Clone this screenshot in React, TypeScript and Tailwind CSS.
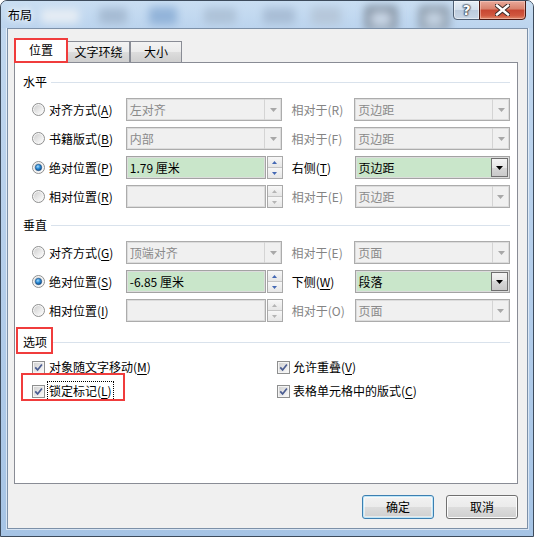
import React from "react";

type Row = {
  checked: boolean;
  label: string;
  key: string;
  kind: "combo" | "spin";
  value: string;
  active: boolean;
  mid: string;
  midKey: string;
  right: string;
};

const hRows: Row[] = [
  { checked: false, label: "对齐方式", key: "A", kind: "combo", value: "左对齐", active: false, mid: "相对于", midKey: "R", right: "页边距" },
  { checked: false, label: "书籍版式", key: "B", kind: "combo", value: "内部", active: false, mid: "相对于", midKey: "F", right: "页边距" },
  { checked: true, label: "绝对位置", key: "P", kind: "spin", value: "1.79 厘米", active: true, mid: "右侧", midKey: "T", right: "页边距" },
  { checked: false, label: "相对位置", key: "R", kind: "spin", value: "", active: false, mid: "相对于", midKey: "E", right: "页边距" },
];

const vRows: Row[] = [
  { checked: false, label: "对齐方式", key: "G", kind: "combo", value: "顶端对齐", active: false, mid: "相对于", midKey: "E", right: "页面" },
  { checked: true, label: "绝对位置", key: "S", kind: "spin", value: "-6.85 厘米", active: true, mid: "下侧", midKey: "W", right: "段落" },
  { checked: false, label: "相对位置", key: "I", kind: "spin", value: "", active: false, mid: "相对于", midKey: "O", right: "页面" },
];

function Down({ color }: { color: string }) {
  return (
    <svg width="7" height="4" viewBox="0 0 7 4">
      <path d="M0 0h7L3.5 4z" fill={color} />
    </svg>
  );
}

function SpinArrow({ up, color }: { up: boolean; color: string }) {
  return (
    <svg width="5" height="3" viewBox="0 0 5 3">
      <path d={up ? "M0 3h5L2.5 0z" : "M0 0h5L2.5 3z"} fill={color} />
    </svg>
  );
}

function Radio({ checked }: { checked: boolean }) {
  return (
    <svg width="13" height="13" viewBox="0 0 13 13" className="shrink-0">
      <defs>
        <linearGradient id="rgIn" x1="0" y1="0" x2="1" y2="1">
          <stop offset="0" stopColor="#cfcfcf" />
          <stop offset="1" stopColor="#fdfdfd" />
        </linearGradient>
        <radialGradient id="rgDot" cx="0.4" cy="0.35" r="0.75">
          <stop offset="0" stopColor="#a6dcff" />
          <stop offset="0.45" stopColor="#2a8bd6" />
          <stop offset="1" stopColor="#0b3f78" />
        </radialGradient>
      </defs>
      <circle cx="6.5" cy="6.5" r="6" fill="#f6f6f6" stroke="#8e8f8f" />
      <circle cx="6.5" cy="6.5" r="4.5" fill="url(#rgIn)" />
      {checked && <circle cx="6.5" cy="6.5" r="3.2" fill="url(#rgDot)" stroke="#1b4b80" strokeWidth="0.6" />}
    </svg>
  );
}

function Check() {
  return (
    <svg width="13" height="13" viewBox="0 0 13 13" className="shrink-0">
      <defs>
        <linearGradient id="cbIn" x1="0" y1="0" x2="1" y2="1">
          <stop offset="0" stopColor="#d2d2d2" />
          <stop offset="1" stopColor="#f8f8f8" />
        </linearGradient>
      </defs>
      <rect x="0.5" y="0.5" width="12" height="12" fill="#f4f4f4" stroke="#8e8f8f" />
      <rect x="2" y="2" width="9" height="9" fill="url(#cbIn)" />
      <path d="M3.2 6.3 L5.6 8.9 L9.9 3.4" stroke="#4b5d92" strokeWidth="1.7" fill="none" />
    </svg>
  );
}

function Lbl({ text, k, underline = true }: { text: string; k: string; underline?: boolean }) {
  return (
    <span className="whitespace-nowrap">
      {text}(<span className={underline ? "underline underline-offset-2" : ""}>{k}</span>)
    </span>
  );
}

function Combo({ text, active, wide }: { text: string; active: boolean; wide: boolean }) {
  return (
    <div
      className={
        "h-[23px] flex border shadow-[inset_0_0_0_1px_#dcdcdc] " +
        (wide ? "w-[157px] " : "w-[156px] ") +
        (active ? "bg-[#c9e6ca] border-[#a3a3a3]" : "bg-[#f0f0f0] border-[#acacac]")
      }
    >
      <div className={"flex-1 pl-[3px] flex items-center " + (active ? "text-black" : "text-[#8a8a8a]")}>{text}</div>
      {active ? (
        <div className="w-[17px] my-[1px] mr-[1px] border border-[#6f6f6f] bg-[linear-gradient(180deg,#f4f4f4,#e6e6e6_50%,#d7d7d7_50%,#c9c9c9)] flex items-center justify-center">
          <Down color="#000" />
        </div>
      ) : (
        <div className="w-[17px] border-l border-[#d4d4d4] flex items-center justify-center">
          <Down color="#a8a8a8" />
        </div>
      )}
    </div>
  );
}

function Spin({ value, active }: { value: string; active: boolean }) {
  const ac = active ? "#4468b4" : "#b4b4b4";
  return (
    <div className="w-[157px] h-[23px] flex">
      <div
        className={
          "w-[140px] border flex items-center pl-[3px] shadow-[inset_0_0_0_1px_#dcdcdc] " +
          (active ? "bg-[#c9e6ca] border-[#a3a3a3] text-black" : "bg-[#f0f0f0] border-[#acacac]")
        }
      >
        {value}
      </div>
      <div className="ml-[1px] w-[16px] flex flex-col border border-[#a9a9a9] bg-[#f0f0f0]">
        <div className="flex-1 flex items-center justify-center border-b border-[#c4c4c4] bg-[linear-gradient(180deg,#f7f7f7,#e6e6e6)]">
          <SpinArrow up color={ac} />
        </div>
        <div className="flex-1 flex items-center justify-center bg-[linear-gradient(180deg,#f7f7f7,#e6e6e6)]">
          <SpinArrow up={false} color={ac} />
        </div>
      </div>
    </div>
  );
}

function PosRow({ r }: { r: Row }) {
  return (
    <div className="ml-[9px] h-[23px] flex items-center">
      <Radio checked={r.checked} />
      <div className="ml-[4px] w-[77px]">
        <Lbl text={r.label} k={r.key} />
      </div>
      {r.kind === "combo" ? <Combo text={r.value} active={r.active} wide /> : <Spin value={r.value} active={r.active} />}
      <div className={"ml-[9px] w-[63px] " + (r.active ? "text-black" : "text-[#848484]")}>
        <Lbl text={r.mid} k={r.midKey} underline={r.active} />
      </div>
      <Combo text={r.right} active={r.active} wide={false} />
    </div>
  );
}

function Header({ text, boxed }: { text: string; boxed?: boolean }) {
  return (
    <div className="h-[16px] flex items-center">
      <span className="relative">
        {text}
        {boxed && <span className="absolute left-[-7px] top-[-7px] w-[37px] h-[27px] border-2 border-[#f03c3c]" />}
      </span>
      <div className="flex-1 ml-[4px] h-px bg-[#d9e2ec]" />
    </div>
  );
}

function TitleBg() {
  return (
    <svg className="absolute inset-0" width="532" height="27" viewBox="0 0 532 27">
      <defs>
        <filter id="bl" x="-50%" y="-50%" width="200%" height="200%">
          <feGaussianBlur stdDeviation="4" />
        </filter>
        <linearGradient id="tb" x1="0" y1="0" x2="0" y2="1">
          <stop offset="0" stopColor="#c9def2" />
          <stop offset="1" stopColor="#bcd4ee" />
        </linearGradient>
      </defs>
      <rect width="532" height="27" fill="url(#tb)" />
      <g filter="url(#bl)">
        <rect x="40" y="8" width="38" height="14" rx="3" fill="#e6edf4" />
        <rect x="98" y="7" width="28" height="16" rx="3" fill="#a6bbd3" />
        <rect x="148" y="6" width="28" height="18" rx="3" fill="#93b4d9" />
        <rect x="203" y="7" width="32" height="16" rx="3" fill="#aec2d8" />
        <rect x="262" y="7" width="32" height="16" rx="3" fill="#a8bdd5" />
        <rect x="310" y="6" width="30" height="18" rx="3" fill="#b6c7da" />
        <rect x="364" y="5" width="32" height="24" rx="3" fill="#7a8898" />
        <rect x="370" y="11" width="20" height="14" fill="#c8d6e6" />
        <rect x="418" y="5" width="30" height="24" rx="3" fill="#8795a4" />
        <rect x="424" y="11" width="18" height="14" fill="#c3d2e2" />
      </g>
    </svg>
  );
}

export default function App() {
  return (
    <div className="w-[534px] h-[537px] flex flex-col rounded-t-[7px] border border-[#3d4b5c] overflow-hidden bg-[linear-gradient(180deg,#c2d8ef_0%,#b3cdea_55%,#a6c4e5_100%)] font-['Noto_Sans_CJK_SC',sans-serif] text-[12px] leading-[16px] text-black">
      {/* title bar */}
      <div className="relative h-[27px] flex justify-between shrink-0">
        <TitleBg />
        <div className="relative pl-[7px] pt-[6px] [text-shadow:0_0_6px_#fff,0_0_10px_#fff]">布局</div>
        <div className="relative flex -mt-px mr-[7px] h-[20px]">
          <div className="w-[27px] h-[20px] border border-[#4f5f73] rounded-bl-[4px] bg-[linear-gradient(180deg,#e6eef6,#d3dfec_50%,#bccbdd_50%,#c9d7e6)] shadow-[inset_0_0_0_1px_rgba(255,255,255,0.5)] flex items-center justify-center">
            <span className="text-white font-bold text-[14px] leading-[14px] font-['DejaVu_Sans',sans-serif] [text-shadow:0_0_1px_#2b3442,0_0_1px_#2b3442,0_0_2px_#2b3442,0_0_2px_#2b3442]">?</span>
          </div>
          <div className="w-[47px] h-[20px] -ml-px border border-[#4a1912] rounded-br-[4px] bg-[linear-gradient(180deg,#e9a99a,#d8816c_45%,#c74631_50%,#d0573f_80%,#e08a6c)] shadow-[inset_0_0_0_1px_rgba(255,220,210,0.45)] flex items-center justify-center">
            <svg width="15" height="12" viewBox="0 0 15 12">
              <path d="M2 1.5 L13 10.5 M13 1.5 L2 10.5" stroke="#3a2a28" strokeWidth="4.4" strokeLinecap="square" />
              <path d="M2 1.5 L13 10.5 M13 1.5 L2 10.5" stroke="#ffffff" strokeWidth="2.4" strokeLinecap="square" />
            </svg>
          </div>
        </div>
      </div>

      {/* client */}
      <div className="flex-1 ml-[6px] mr-[5px] mb-[7px] border border-[#7c90a8] shadow-[0_0_0_1px_rgba(255,255,255,0.55)] bg-[#f0f0f0] flex flex-col pt-[9px] pl-[6px] pr-[9px]">
        {/* tabs */}
        <div className="h-[24px] flex items-end">
          <div className="relative z-10 w-[54px] h-[25px] -mb-px bg-white border border-b-0 border-[#898c95] flex items-center justify-center pb-[2px]">
            位置
            <span className="absolute left-[-1px] top-[-1px] right-[-1px] bottom-0 border-2 border-[#f03c3c]" />
          </div>
          <div className="w-[63px] h-[21px] -ml-px border border-b-0 border-[#898c95] bg-[linear-gradient(180deg,#f3f3f3,#ebebeb_50%,#dddddd_50%,#cfcfcf)] flex items-center justify-center">
            文字环绕
          </div>
          <div className="w-[52px] h-[21px] border border-b-0 border-[#898c95] bg-[linear-gradient(180deg,#f3f3f3,#ebebeb_50%,#dddddd_50%,#cfcfcf)] flex items-center justify-center">
            大小
          </div>
        </div>

        {/* panel */}
        <div className="h-[422px] border border-[#898c95] bg-white pt-[11px] pl-[8px] pr-[7px] flex flex-col">
          <Header text="水平" />
          <div className="mt-[8px] flex flex-col gap-[6px]">
            {hRows.map((r, i) => (
              <PosRow key={i} r={r} />
            ))}
          </div>
          <div className="mt-[9px]">
            <Header text="垂直" />
          </div>
          <div className="mt-[8px] flex flex-col gap-[6px]">
            {vRows.map((r, i) => (
              <PosRow key={i} r={r} />
            ))}
          </div>
          <div className="mt-[12px]">
            <Header text="选项" boxed />
          </div>
          <div className="mt-[9px] ml-[9px] flex flex-col gap-[8px]">
            <div className="h-[16px] flex items-center">
              <div className="w-[245px] flex items-center">
                <Check />
                <span className="ml-[4px]">
                  <Lbl text="对象随文字移动" k="M" />
                </span>
              </div>
              <div className="flex items-center">
                <Check />
                <span className="ml-[3px]">
                  <Lbl text="允许重叠" k="V" />
                </span>
              </div>
            </div>
            <div className="h-[16px] flex items-center">
              <div className="relative w-[245px] flex items-center">
                <Check />
                <span className="ml-[2px] px-[1px] py-[1px] border border-dotted border-black">
                  <Lbl text="锁定标记" k="L" />
                </span>
                <span className="absolute left-[-11px] top-[-8px] w-[104px] h-[28px] border-2 border-[#f03c3c]" />
              </div>
              <div className="flex items-center">
                <Check />
                <span className="ml-[3px]">
                  <Lbl text="表格单元格中的版式" k="C" />
                </span>
              </div>
            </div>
          </div>
        </div>

        {/* buttons */}
        <div className="mt-[11px] flex justify-end gap-[12px]">
          <button className="w-[72px] h-[24px] rounded-[3px] border border-[#3c7fb1] bg-[linear-gradient(180deg,#f2f2f2,#ebebeb_50%,#dddddd_50%,#cfcfcf)] shadow-[inset_0_0_0_1px_#bfe6f8,inset_0_0_0_2px_rgba(255,255,255,0.5)] flex items-center justify-center">
            确定
          </button>
          <button className="w-[72px] h-[24px] rounded-[3px] border border-[#707070] bg-[linear-gradient(180deg,#f2f2f2,#ebebeb_50%,#dddddd_50%,#cfcfcf)] shadow-[inset_0_0_0_1px_#fcfcfc] flex items-center justify-center">
            取消
          </button>
        </div>
      </div>
    </div>
  );
}
